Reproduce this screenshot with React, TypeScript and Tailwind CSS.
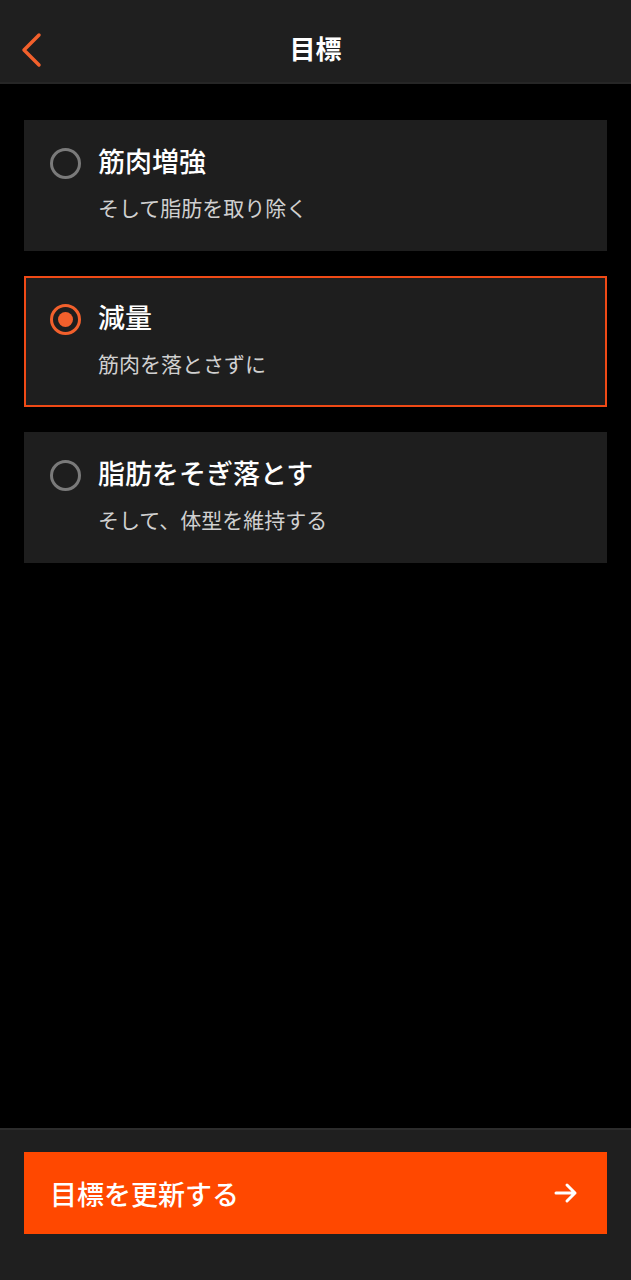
import React, { useState } from "react";

const goals = [
  { id: "gain", title: "筋肉増強", sub: "そして脂肪を取り除く" },
  { id: "lose", title: "減量", sub: "筋肉を落とさずに" },
  { id: "cut", title: "脂肪をそぎ落とす", sub: "そして、体型を維持する" },
];

const App = () => {
  const [selected, setSelected] = useState("lose");

  return (
    <div
      className="w-[631px] h-[1280px] bg-black flex flex-col text-white"
      style={{ fontFamily: '"Noto Sans CJK JP", "Noto Sans", sans-serif' }}
    >
      {/* Header */}
      <div className="relative h-[84px] bg-[#1f1f1f] border-b-2 border-[#262626] flex items-center justify-center pt-[14px] shrink-0">
        <button className="absolute left-[16px] top-[30px] w-[30px] h-[40px] flex items-center justify-center">
          <svg width="24" height="36" viewBox="0 0 24 36" fill="none">
            <path
              d="M20 3 L5 18 L20 33"
              stroke="#f2602c"
              strokeWidth="3.5"
              strokeLinecap="round"
              strokeLinejoin="round"
            />
          </svg>
        </button>
        <h1 className="text-[26px] font-bold leading-none">目標</h1>
      </div>

      {/* Goal options */}
      <div className="flex-1 flex flex-col gap-[25px] px-[24px] pt-[36px]">
        {goals.map((g) => {
          const active = g.id === selected;
          return (
            <button
              key={g.id}
              onClick={() => setSelected(g.id)}
              className={`h-[131px] bg-[#1e1e1e] flex flex-col text-left ${
                active ? "border-2 border-[#f04a16] pl-[24px] pt-[24px]" : "pl-[26px] pt-[26px]"
              }`}
            >
              <div className="flex items-center gap-[17px] h-[34px]">
                {active ? (
                  <span className="w-[31px] h-[31px] rounded-full border-[3px] border-[#f2602c] flex items-center justify-center">
                    <span className="w-[15px] h-[15px] rounded-full bg-[#f2602c]" />
                  </span>
                ) : (
                  <span className="w-[31px] h-[31px] rounded-full border-[3px] border-[#7a7a7a]" />
                )}
                <span className="text-[27px] font-medium leading-none pb-[6px]">{g.title}</span>
              </div>
              <div className="pl-[48px] mt-[17px] text-[21px] text-[#d0d0d0] leading-none">
                {g.sub}
              </div>
            </button>
          );
        })}
      </div>

      {/* Bottom bar */}
      <div className="h-[152px] bg-[#1f1f1f] border-t-2 border-[#2c2c2c] px-[24px] pt-[22px] shrink-0">
        <button className="w-full h-[82px] bg-[#ff4800] flex items-center justify-between pl-[26px] pr-[28px]">
          <span className="text-[27px] font-medium leading-none">目標を更新する</span>
          <svg width="26" height="26" viewBox="0 0 26 26" fill="none">
            <path
              d="M3 13 H22 M14 5 L22 13 L14 21"
              stroke="white"
              strokeWidth="3"
              strokeLinecap="round"
              strokeLinejoin="round"
            />
          </svg>
        </button>
      </div>
    </div>
  );
};

export default App;
